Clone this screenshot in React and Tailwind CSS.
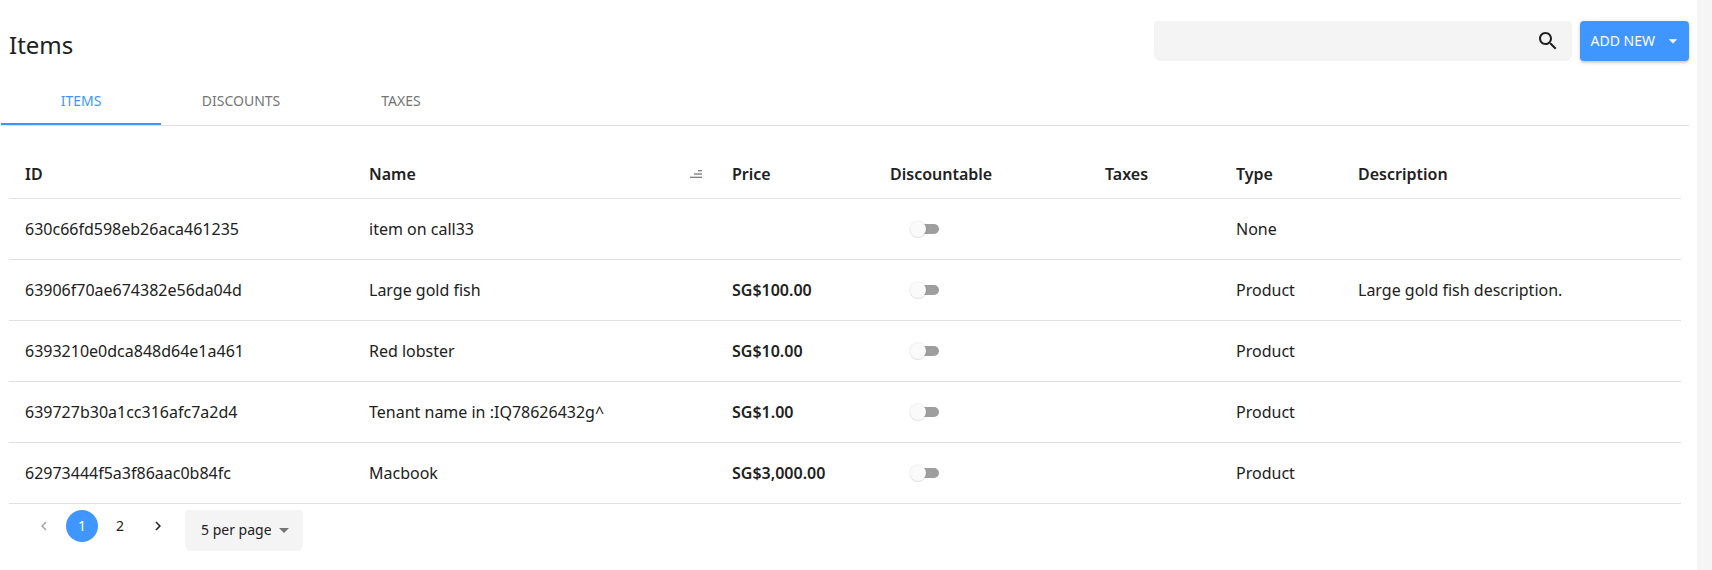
import { useState } from "react";

const tabs = ["Items", "Discounts", "Taxes"];

const initialRows = [
  { id: "630c66fd598eb26aca461235", name: "item on call33", price: "", type: "None", description: "" },
  { id: "63906f70ae674382e56da04d", name: "Large gold fish", price: "SG$100.00", type: "Product", description: "Large gold fish description." },
  { id: "6393210e0dca848d64e1a461", name: "Red lobster", price: "SG$10.00", type: "Product", description: "" },
  { id: "639727b30a1cc316afc7a2d4", name: "Tenant name in :IQ78626432g^", price: "SG$1.00", type: "Product", description: "" },
  { id: "62973444f5a3f86aac0b84fc", name: "Macbook", price: "SG$3,000.00", type: "Product", description: "" },
];

function Icon({ d, className }) {
  return (
    <svg viewBox="0 0 24 24" fill="currentColor" aria-hidden="true" className={className}>
      <path d={d} />
    </svg>
  );
}

const SEARCH =
  "M15.5 14h-.79l-.28-.27C15.41 12.59 16 11.11 16 9.5 16 5.91 13.09 3 9.5 3S3 5.91 3 9.5 5.91 16 9.5 16c1.61 0 3.09-.59 4.23-1.57l.27.28v.79l5 4.99L20.49 19l-4.99-5zm-6 0C7.01 14 5 11.99 5 9.5S7.01 5 9.5 5 14 7.01 14 9.5 11.99 14 9.5 14z";
const ARROW_DOWN = "M7 10l5 5 5-5z";
const CHEVRON_LEFT = "M15.41 7.41L14 6l-6 6 6 6 1.41-1.41L10.83 12z";
const CHEVRON_RIGHT = "M10 6L8.59 7.41 13.17 12l-4.58 4.59L10 18l6-6z";

function SortIcon() {
  return (
    <svg viewBox="0 0 12 8" aria-hidden="true" className="h-2 w-3">
      <rect x="8" y="0" width="4" height="1" fill="#808080" />
      <rect x="8" y="1" width="4" height="1" fill="#d4d4d4" />
      <rect x="4" y="3" width="8" height="2" fill="#a8a8a8" />
      <rect x="0" y="6" width="12" height="1" fill="#d4d4d4" />
      <rect x="0" y="7" width="12" height="1" fill="#808080" />
    </svg>
  );
}

function Toggle({ label }) {
  return (
    <label className="grid h-6 w-10 cursor-pointer items-center">
      <input type="checkbox" role="switch" aria-label={label} className="peer sr-only" />
      <span className="col-start-1 row-start-1 mx-[7px] h-[10px] rounded-full bg-[#9e9e9e] peer-checked:bg-[#a0cbff]" />
      <span className="col-start-1 row-start-1 ml-1 size-4 rounded-full bg-[#fafafa] shadow-[0_1px_1px_rgba(0,0,0,0.08),0_0_2px_rgba(0,0,0,0.14)] peer-checked:translate-x-4 peer-checked:bg-[#4096ff]" />
    </label>
  );
}

export default function App() {
  const [tab, setTab] = useState("Items");
  const [page, setPage] = useState(1);

  return (
    <div className="min-h-screen bg-[#f5f5f5] pr-[15px] font-['Noto_Sans',sans-serif] text-[#212121]">
      <main className="min-h-screen bg-white pr-2 pb-4 pl-px">
        <header className="flex items-start justify-between pt-[21px]">
          <h1 className="pt-2 pl-2 text-2xl leading-8">Items</h1>
          <div className="flex gap-2">
            <form role="search" className="flex h-10 w-[418px] items-center rounded-t-sm rounded-b-md bg-[#f4f4f4] pr-3" onSubmit={(e) => e.preventDefault()}>
              <input type="search" aria-label="Search items" className="h-full min-w-0 flex-1 bg-transparent pl-3 text-base outline-none" />
              <button type="submit" aria-label="Search">
                <Icon d={SEARCH} className="size-6" />
              </button>
            </form>
            <button
              type="button"
              className="flex h-10 items-center gap-2 rounded-sm bg-[#4096ff] pr-1.5 pl-[11px] text-sm text-white uppercase shadow-[0_2px_2px_rgba(0,0,0,0.12),0_1px_5px_rgba(0,0,0,0.12)]"
            >
              Add new
              <Icon d={ARROW_DOWN} className="size-5" />
            </button>
          </div>
        </header>

        <div role="tablist" className="mt-4 flex border-b border-[#e0e0e0]">
          {tabs.map((t) => (
            <button
              key={t}
              type="button"
              role="tab"
              aria-selected={t === tab}
              onClick={() => setTab(t)}
              className={
                t === tab
                  ? "h-12 w-40 border-b-2 border-[#4096ff] pt-0.5 text-sm text-[#4096ff] uppercase"
                  : "h-12 w-40 border-b-2 border-transparent pt-0.5 text-sm text-[#757575] uppercase"
              }
            >
              {t}
            </button>
          ))}
        </div>

        <section className="px-2 pt-6">
          <table className="w-full table-fixed border-collapse text-left text-base">
            <colgroup>
              <col className="w-[344px]" />
              <col className="w-[363px]" />
              <col className="w-[158px]" />
              <col className="w-[215px]" />
              <col className="w-[131px]" />
              <col className="w-[122px]" />
              <col className="w-[339px]" />
            </colgroup>
            <thead>
              <tr className="h-12 border-b border-[#e0e0e0]">
                <th scope="col" className="px-4 font-semibold">ID</th>
                <th scope="col" className="pr-[14px] pl-4 font-semibold">
                  <span className="flex items-center justify-between">
                    Name
                    <button type="button" aria-label="Sort by name">
                      <SortIcon />
                    </button>
                  </span>
                </th>
                <th scope="col" className="px-4 font-semibold">Price</th>
                <th scope="col" className="px-4 font-semibold">Discountable</th>
                <th scope="col" className="px-4 font-semibold">Taxes</th>
                <th scope="col" className="px-4 font-semibold">Type</th>
                <th scope="col" className="px-4 font-semibold">Description</th>
              </tr>
            </thead>
            <tbody>
              {initialRows.map((r) => (
                <tr key={r.id} className="h-[61px] border-b border-[#e0e0e0]">
                  <td className="px-4">{r.id}</td>
                  <td className="px-4">{r.name}</td>
                  <td className="px-4 font-semibold">{r.price}</td>
                  <td className="px-8">
                    <Toggle label={`${r.name} discountable`} />
                  </td>
                  <td className="px-4" />
                  <td className="px-4">{r.type}</td>
                  <td className="px-4">{r.description}</td>
                </tr>
              ))}
            </tbody>
          </table>

          <div className="flex items-start gap-2 pt-1.5 pl-4 text-sm">
            <nav aria-label="Pagination" className="flex">
              <button type="button" aria-label="Previous page" disabled={page === 1} onClick={() => setPage(1)} className="mx-[3px] flex size-8 items-center justify-center disabled:opacity-40">
                <Icon d={CHEVRON_LEFT} className="size-[18px]" />
              </button>
              {[1, 2].map((n) => (
                <button
                  key={n}
                  type="button"
                  onClick={() => setPage(n)}
                  className={n === page ? "mx-[3px] size-8 rounded-full bg-[#4096ff] text-white" : "mx-[3px] size-8 rounded-full"}
                >
                  {n}
                </button>
              ))}
              <button type="button" aria-label="Next page" disabled={page === 2} onClick={() => setPage(2)} className="mx-[3px] flex size-8 items-center justify-center disabled:opacity-40">
                <Icon d={CHEVRON_RIGHT} className="size-[18px]" />
              </button>
            </nav>
            <div className="grid items-center">
              <select aria-label="Rows per page" className="col-start-1 row-start-1 h-[41px] w-[118px] appearance-none rounded-t-sm rounded-b-md bg-[#f4f4f4] pr-8 pl-4">
                <option>5 per page</option>
                <option>10 per page</option>
                <option>25 per page</option>
              </select>
              <Icon d={ARROW_DOWN} className="pointer-events-none col-start-1 row-start-1 mr-[7px] size-6 justify-self-end text-[#757575]" />
            </div>
          </div>
        </section>
      </main>
    </div>
  );
}
